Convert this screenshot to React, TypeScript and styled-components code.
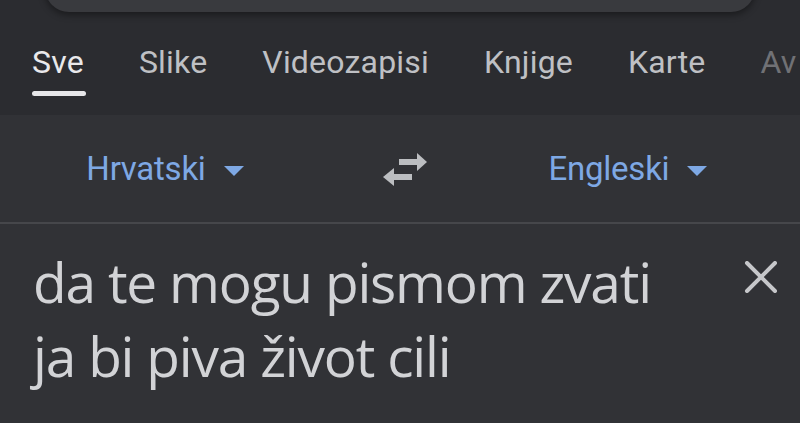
import React from "react";
import styled, { createGlobalStyle } from "styled-components";

const Global = createGlobalStyle`
  html, body { margin: 0; padding: 0; background: #313236; }
  body { font-family: Roboto, "Noto Sans", sans-serif; }
  #root { width: 800px; height: 423px; overflow: hidden; }
`;

const Page = styled.div`
  width: 800px;
  height: 423px;
  display: flex;
  flex-direction: column;
  background: #313236;
  overflow: hidden;
`;

const Header = styled.div`
  background: #2b2c30;
  display: flex;
  flex-direction: column;
  height: 115px;
  flex-shrink: 0;
`;

const SearchEdge = styled.div`
  margin: -30px 45px 0 45px;
  height: 42px;
  border-radius: 0 0 24px 24px;
  background: #393a3e;
  box-shadow: 0 3px 7px rgba(0, 0, 0, 0.4);
`;

const Tabs = styled.div`
  display: flex;
  gap: 55px;
  padding: 31px 0 0 32px;
  white-space: nowrap;
  overflow: hidden;
`;

const Tab = styled.div<{ $active?: boolean; $faded?: boolean }>`
  position: relative;
  font-size: 32px;
  line-height: 38px;
  letter-spacing: 0.2px;
  color: ${(p) => (p.$active ? "#e9e9eb" : p.$faded ? "#707175" : "#bfc0c4")};
  padding-bottom: 15px;
  &::after {
    content: "";
    display: ${(p) => (p.$active ? "block" : "none")};
    position: absolute;
    left: 0;
    right: -2px;
    bottom: 0;
    height: 5px;
    border-radius: 3px;
    background: #e6e6e8;
  }
`;

const LangRow = styled.div`
  height: 107px;
  flex-shrink: 0;
  display: grid;
  grid-template-columns: 330px 150px 296px;
  align-items: center;
  border-bottom: 2px solid #46474b;
`;

const Lang = styled.div`
  display: flex;
  align-items: center;
  gap: 18px;
  justify-content: center;
  color: #7ea8e4;
  font-size: 33px;
  line-height: 38px;
  letter-spacing: -0.25px;
`;

const Caret = styled.span`
  width: 0;
  height: 0;
  border-left: 10px solid transparent;
  border-right: 10px solid transparent;
  border-top: 10px solid #7ea8e4;
  margin-top: 4px;
`;

const SwapBox = styled.div`
  display: flex;
  justify-content: center;
  align-items: center;
  padding-top: 2px;
`;

const Input = styled.div`
  display: flex;
  justify-content: space-between;
  padding: 21px 22px 0 33px;
`;

const Text = styled.div`
  font-family: "Open Sans", Roboto, sans-serif;
  font-size: 55px;
  line-height: 74px;
  color: #d2d3d6;
  letter-spacing: -1.2px;
  white-space: nowrap;
`;

const Close = styled.div`
  padding-top: 16px;
`;

export default function App() {
  return (
    <Page>
      <Global />
      <Header>
        <SearchEdge />
        <Tabs>
          <Tab $active>Sve</Tab>
          <Tab>Slike</Tab>
          <Tab>Videozapisi</Tab>
          <Tab>Knjige</Tab>
          <Tab>Karte</Tab>
          <Tab $faded>Av</Tab>
        </Tabs>
      </Header>
      <LangRow>
        <Lang>
          Hrvatski
          <Caret />
        </Lang>
        <SwapBox>
          <svg width="48" height="34" viewBox="0 0 48 34">
            <g fill="#bcbec1">
              <rect x="18" y="6" width="19" height="6" />
              <polygon points="36,0 46,9 36,18" />
              <rect x="12" y="21" width="19" height="6" />
              <polygon points="13,15 2,24 13,33" />
            </g>
          </svg>
        </SwapBox>
        <Lang>
          Engleski
          <Caret />
        </Lang>
      </LangRow>
      <Input>
        <Text>
          da te mogu pismom zvati
          <br />
          ja bi piva život cili
        </Text>
        <Close>
          <svg width="34" height="32" viewBox="0 0 34 32">
            <path d="M3 2 L31 30 M31 2 L3 30" stroke="#c6c7ca" strokeWidth="4" strokeLinecap="round" />
          </svg>
        </Close>
      </Input>
    </Page>
  );
}
